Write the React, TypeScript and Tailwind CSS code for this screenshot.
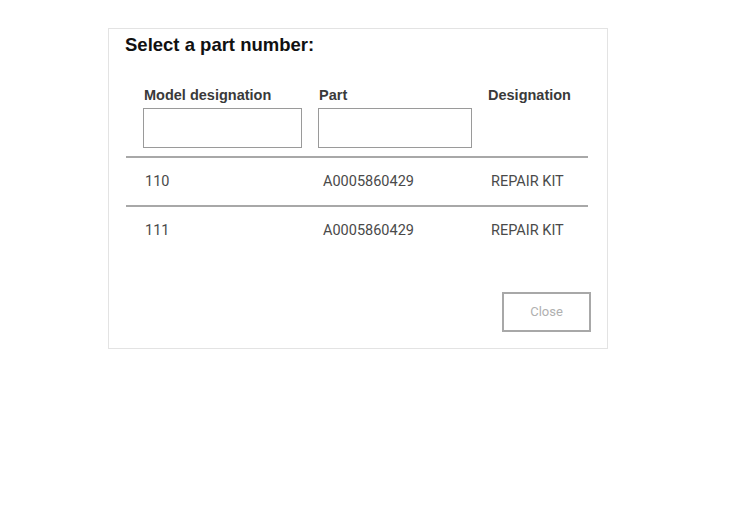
import React from "react";

type Row = { model: string; part: string; designation: string };

const rows: Row[] = [
  { model: "110", part: "A0005860429", designation: "REPAIR KIT" },
  { model: "111", part: "A0005860429", designation: "REPAIR KIT" },
];

export default function App() {
  return (
    <div className="min-h-[528px] w-[735px] bg-white font-['Roboto','Liberation_Sans',sans-serif]">
      <div className="ml-[108px] pt-[28px]">
        <div className="flex h-[321px] w-[500px] flex-col border border-[#e3e3e3] bg-white">
          <h1 className="pl-[16px] pt-[6px] font-['Liberation_Sans',sans-serif] text-[18.5px] font-bold leading-[20px] text-[#111]">
            Select a part number:
          </h1>

          <div className="ml-[17px] mr-[19px] mt-[30px]">
            {/* header with filters */}
            <div className="grid grid-cols-[175px_170px_1fr] pl-[17px] font-['Liberation_Sans',sans-serif]">
              <div>
                <div className="pl-[1px] text-[14.5px] font-bold leading-[20px] text-[#3a3a3a]">Model designation</div>
                <input className="mt-[3px] h-[40px] w-[159px] border border-[#9a9a9a] outline-none" />
              </div>
              <div>
                <div className="pl-[1px] text-[14.5px] font-bold leading-[20px] text-[#3a3a3a]">Part</div>
                <input className="mt-[3px] h-[40px] w-[154px] border border-[#9a9a9a] outline-none" />
              </div>
              <div className="text-[14.5px] font-bold leading-[20px] text-[#3a3a3a]">Designation</div>
            </div>

            <div className="mt-[8px]">
              {rows.map((r, i) => (
                <div
                  key={i}
                  className="grid h-[49px] grid-cols-[175px_170px_1fr] items-center border-t-2 border-[#a8a8a8] pl-[17px] pt-[1px] text-[14.5px] text-[#4a4a4a]"
                >
                  <div className="pl-[2px]">{r.model}</div>
                  <div className="pl-[5px]">{r.part}</div>
                  <div className="pl-[3px]">{r.designation}</div>
                </div>
              ))}
            </div>
          </div>

          <div className="mt-auto flex justify-end pb-[16px] pr-[16px]">
            <button
              type="button"
              className="h-[40px] w-[89px] border-2 border-[#a8a8a8] text-[13px] text-[#b0b0b0]"
            >
              Close
            </button>
          </div>
        </div>
      </div>
    </div>
  );
}
